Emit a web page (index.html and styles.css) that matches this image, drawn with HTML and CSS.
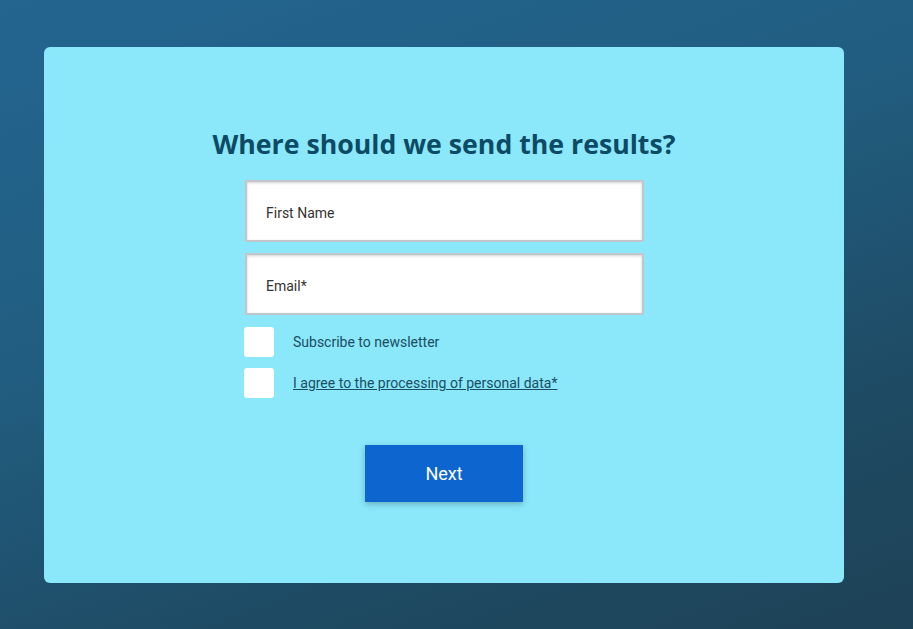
FILE: index.html
```html
<!DOCTYPE html>
<html lang="en">
<head>
<meta charset="utf-8">
<title>Where should we send the results?</title>
<link rel="stylesheet" href="styles.css">
</head>
<body>
<main class="card">
  <h1 class="title">Where should we send the results?</h1>
  <form class="form">
    <div class="field"><span class="placeholder">First Name</span></div>
    <div class="field"><span class="placeholder">Email*</span></div>
    <label class="check">
      <span class="box"></span>
      <span class="check-label">Subscribe to newsletter</span>
    </label>
    <label class="check">
      <span class="box"></span>
      <span class="check-label link">I agree to the processing of personal data*</span>
    </label>
    <div class="actions">
      <button type="button" class="btn">Next</button>
    </div>
  </form>
</main>
</body>
</html>
```

FILE: styles.css
```css
* { box-sizing: border-box; }
html, body { height: 100%; }
body {
  margin: 0;
  padding: 47px 0 0 44px;
  background: linear-gradient(160deg, #236590 0%, #215d80 40%, #1e4a63 75%, #1e4256 100%);
  font-family: Roboto, "Liberation Sans", sans-serif;
  overflow: hidden;
}
.card {
  width: 800px;
  height: 536px;
  background: #8ae8fa;
  border-radius: 6px;
  padding-top: 79px;
  display: flex;
  flex-direction: column;
  align-items: center;
}
.title {
  margin: 0;
  font-family: "Open Sans", "Liberation Sans", sans-serif;
  font-weight: 700;
  font-size: 26.7px;
  line-height: 36px;
  color: #0d4a65;
}
.form {
  margin-top: 18px;
  margin-left: 2px;
  width: 400px;
  display: flex;
  flex-direction: column;
}
.field {
  width: 399px;
  height: 62px;
  background: #fff;
  border: 2px solid #c3c6c8;
  box-shadow: inset 0 1px 3px rgba(0,0,0,0.18);
  display: flex;
  align-items: center;
  padding: 3px 0 0 19px;
  margin-bottom: 11px;
}
.field + .field { margin-bottom: 12px; }
.placeholder {
  font-size: 14px;
  color: #333;
}
.check {
  display: flex;
  align-items: center;
  height: 30px;
  margin-bottom: 11px;
}
.box {
  width: 30px;
  height: 30px;
  background: #fff;
  border-radius: 3px;
  flex: none;
  margin-left: -1px;
}
.check-label {
  margin-left: 19px;
  font-size: 14px;
  color: #1b4d63;
}
.link { text-decoration: underline; }
.actions {
  display: flex;
  justify-content: center;
  margin-top: 36px;
}
.btn {
  width: 158px;
  height: 57px;
  border: 0;
  background: #0d66d0;
  color: #fff;
  font-family: Roboto, "Liberation Sans", sans-serif;
  font-size: 18px;
  box-shadow: 0 2px 6px rgba(0,0,0,0.25);
  margin-right: 2px;
}
```
